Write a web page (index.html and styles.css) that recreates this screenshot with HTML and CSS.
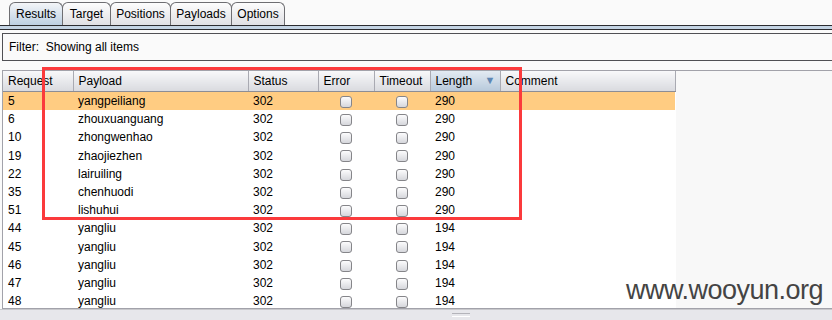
FILE: index.html
```html
<!DOCTYPE html>
<html lang="en">
<head>
    <title>Intruder results</title>
    <meta charset="UTF-8">
    <meta name="viewport" content="width=device-width, initial-scale=1.0">
    <link rel="stylesheet" href="styles.css">
</head>
<body>
<div class="page">
    <div class="tabs">
        <div class="tab tab-results active">Results</div>
        <div class="tab tab-target">Target</div>
        <div class="tab tab-positions">Positions</div>
        <div class="tab tab-payloads">Payloads</div>
        <div class="tab tab-options">Options</div>
    </div>
    <div class="tab-rule"></div>
    <div class="filter">Filter:&nbsp; Showing all items</div>
    <div class="results">
        <table class="grid">
            <colgroup>
                <col class="c-req"><col class="c-pay"><col class="c-status"><col class="c-err"><col class="c-time"><col class="c-len"><col class="c-comment">
            </colgroup>
            <thead>
                <tr>
                    <th>Request</th>
                    <th>Payload</th>
                    <th>Status</th>
                    <th>Error</th>
                    <th>Timeout</th>
                    <th class="sorted">Length<span class="arrow">&#9660;</span></th>
                    <th>Comment</th>
                </tr>
            </thead>
            <tbody>
                <tr class="selected"><td>5</td><td>yangpeiliang</td><td>302</td><td class="box"><span class="check"></span></td><td class="box"><span class="check"></span></td><td>290</td><td></td></tr>
                <tr><td>6</td><td>zhouxuanguang</td><td>302</td><td class="box"><span class="check"></span></td><td class="box"><span class="check"></span></td><td>290</td><td></td></tr>
                <tr><td>10</td><td>zhongwenhao</td><td>302</td><td class="box"><span class="check"></span></td><td class="box"><span class="check"></span></td><td>290</td><td></td></tr>
                <tr><td>19</td><td>zhaojiezhen</td><td>302</td><td class="box"><span class="check"></span></td><td class="box"><span class="check"></span></td><td>290</td><td></td></tr>
                <tr><td>22</td><td>lairuiling</td><td>302</td><td class="box"><span class="check"></span></td><td class="box"><span class="check"></span></td><td>290</td><td></td></tr>
                <tr><td>35</td><td>chenhuodi</td><td>302</td><td class="box"><span class="check"></span></td><td class="box"><span class="check"></span></td><td>290</td><td></td></tr>
                <tr><td>51</td><td>lishuhui</td><td>302</td><td class="box"><span class="check"></span></td><td class="box"><span class="check"></span></td><td>290</td><td></td></tr>
                <tr><td>44</td><td>yangliu</td><td>302</td><td class="box"><span class="check"></span></td><td class="box"><span class="check"></span></td><td>194</td><td></td></tr>
                <tr><td>45</td><td>yangliu</td><td>302</td><td class="box"><span class="check"></span></td><td class="box"><span class="check"></span></td><td>194</td><td></td></tr>
                <tr><td>46</td><td>yangliu</td><td>302</td><td class="box"><span class="check"></span></td><td class="box"><span class="check"></span></td><td>194</td><td></td></tr>
                <tr><td>47</td><td>yangliu</td><td>302</td><td class="box"><span class="check"></span></td><td class="box"><span class="check"></span></td><td>194</td><td></td></tr>
                <tr><td>48</td><td>yangliu</td><td>302</td><td class="box"><span class="check"></span></td><td class="box"><span class="check"></span></td><td>194</td><td></td></tr>
            </tbody>
        </table>
    </div>
    <div class="splitter"><span class="grip"></span></div>
    <div class="highlight"></div>
    <div class="watermark">www.wooyun.org</div>
</div>
</body>
</html>
```

FILE: styles.css
```css
body {
    margin: 0;
    background-color: #fafafa;
    font-family: "Liberation Sans", Arial, sans-serif;
    font-size: 12px;
    color: #000;
}

.page {
    position: relative;
    width: 832px;
    height: 320px;
    overflow: hidden;
}

/* tab strip */
.tabs {
    display: flex;
    align-items: flex-end;
    height: 25px;
    padding-left: 9px;
    box-sizing: border-box;
}

.tab {
    box-sizing: border-box;
    height: 23px;
    line-height: 23px;
    text-align: center;
    border: 1px solid #6e6e72;
    border-bottom: none;
    border-radius: 6px 6px 0 0;
    background: linear-gradient(#fdfdfd, #e0e0e4);
    margin-left: -1px;
}

.tab-results { width: 54px; margin-left: 0; }
.tab-target { width: 49px; }
.tab-positions { width: 61px; }
.tab-payloads { width: 62px; }
.tab-options { width: 54px; }

.tab.active {
    background: linear-gradient(#f3f5f8, #bdd0e3);
}

.tab-rule {
    height: 3px;
    background-color: #c4d4e4;
    border-top: 1px solid #2c2c30;
    border-bottom: 1px solid #2c2c30;
}

.filter {
    margin: 3px 0 0 2px;
    height: 26px;
    line-height: 26px;
    padding-left: 6px;
    border: 1px solid #505054;
    border-right: none;
}

/* results table */
.results {
    margin: 9px 0 0 2px;
    height: 237px;
    border: 1px solid #a2a2aa;
    border-right: none;
    background-color: #f8f8f8;
    overflow: hidden;
}

.grid {
    border-collapse: collapse;
    table-layout: fixed;
    width: 672px;
    background-color: #fff;
}

.c-req { width: 70px; }
.c-pay { width: 175px; }
.c-status { width: 70px; }
.c-err { width: 56px; }
.c-time { width: 56px; }
.c-len { width: 70px; }
.c-comment { width: 175px; }

.grid th {
    height: 20px;
    padding: 0 5px;
    text-align: left;
    font-weight: normal;
    background: linear-gradient(#f8f8fa, #d9dadf);
    border-right: 1px solid #a9aab2;
    border-bottom: 1px solid #8c8d95;
    white-space: nowrap;
}

.grid th.sorted {
    background: linear-gradient(#e3eaf2, #b7c9db);
}

.arrow {
    float: right;
    color: #5f86b3;
    font-size: 11px;
    margin-right: -1px;
}

.grid td {
    height: 18.2px;
    padding: 0 5px;
    white-space: nowrap;
}

.grid tr.selected td {
    background-color: #ffcc82;
}

.grid td.box {
    text-align: center;
    padding: 0;
}

.check {
    display: inline-block;
    width: 10px;
    height: 10px;
    border: 1px solid #858589;
    border-radius: 3px;
    background: linear-gradient(#fcfcfd, #d6d7dc);
    vertical-align: middle;
}

.splitter {
    height: 11px;
    border-top: 1px solid #c8c8cc;
    background-color: #e7e7eb;
    position: relative;
}

.grip {
    position: absolute;
    left: 452px;
    top: 3px;
    width: 18px;
    height: 2px;
    border-top: 1px solid #b4b4ba;
    border-bottom: 1px solid #fff;
}

/* overlays */
.highlight {
    position: absolute;
    left: 42px;
    top: 67px;
    width: 480px;
    height: 153px;
    box-sizing: border-box;
    border: 3px solid #fb3a3c;
}

.watermark {
    position: absolute;
    right: 9px;
    top: 275px;
    font-family: "Liberation Sans", Arial, sans-serif;
    font-size: 27px;
    letter-spacing: -0.5px;
    color: #444;
}
```
